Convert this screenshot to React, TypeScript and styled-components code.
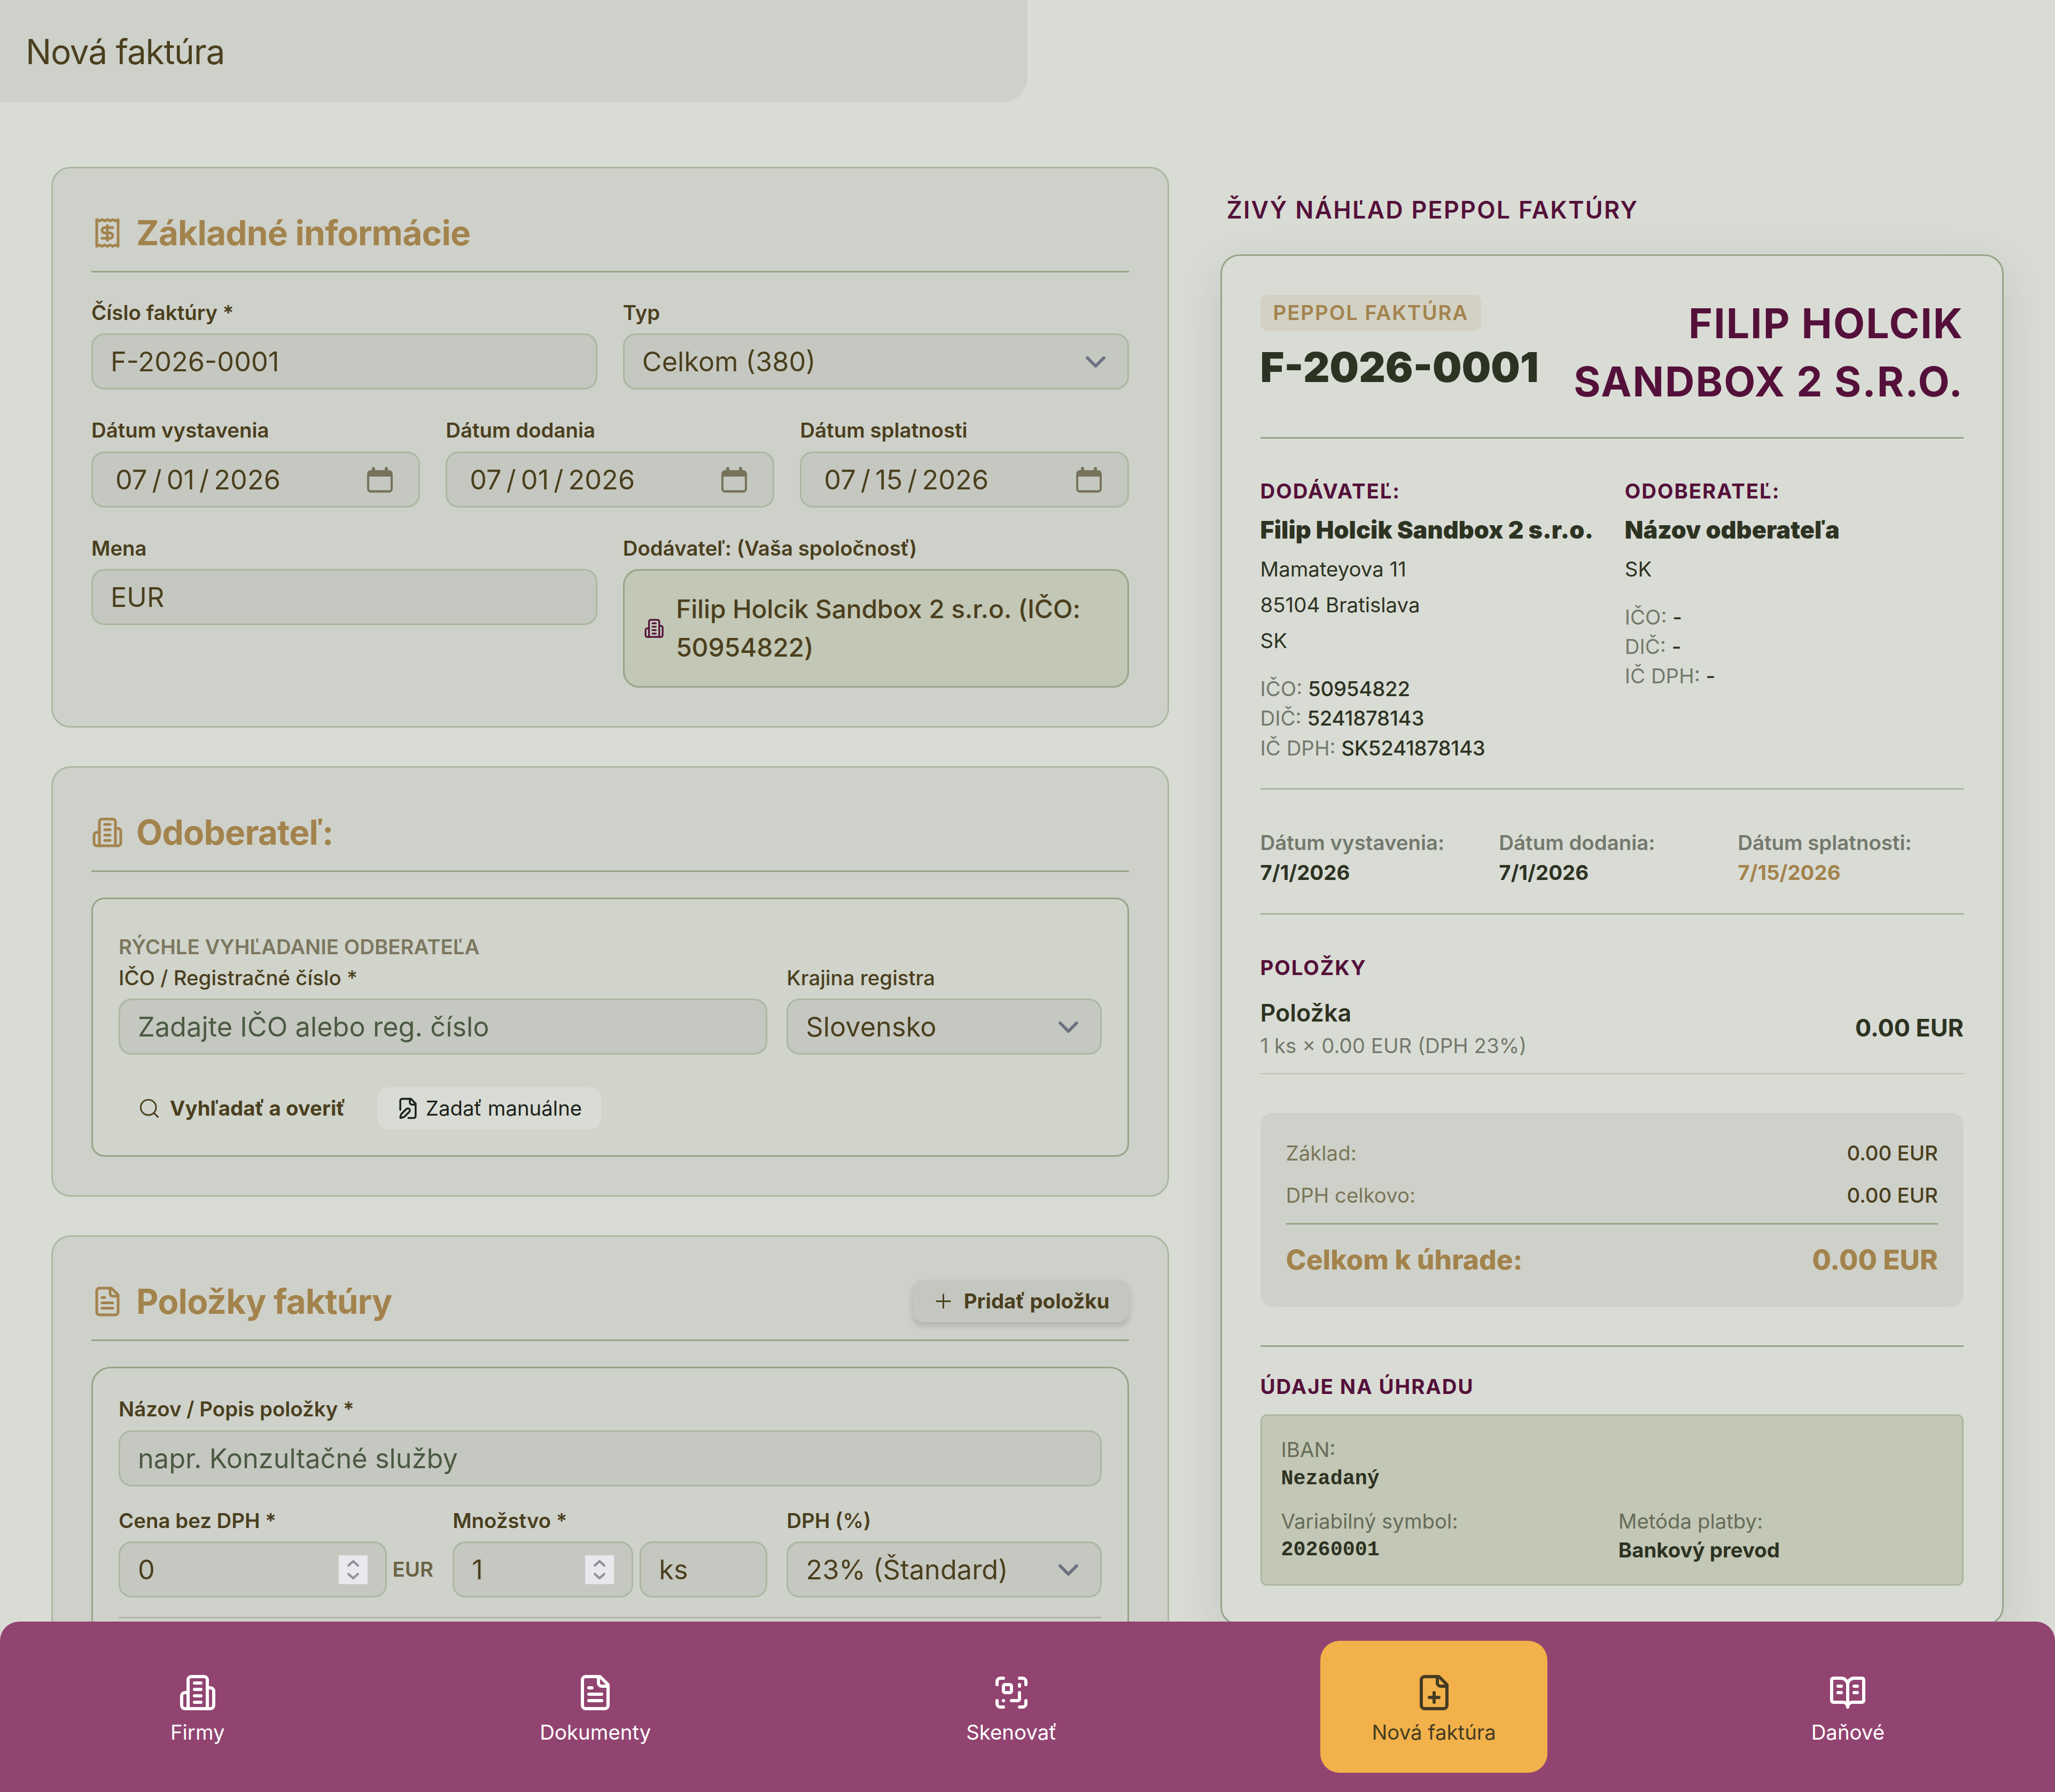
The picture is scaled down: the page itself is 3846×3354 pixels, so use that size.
import React from 'react';
import styled, { createGlobalStyle } from 'styled-components';
import { BookOpenText, Plus, ScanQrCode, Search } from 'lucide-react';

const colors = {
	page: '#d9dcd5',
	surface: '#ced1c9',
	field: '#c5c8c0',
	sage: '#c3c7b5',
	line: '#aeb6a1',
	lineStrong: '#97a487',
	text: '#4b3f1e',
	textMuted: '#7b7659',
	ink: '#2d3322',
	inkMuted: '#73796c',
	gold: '#a3834d',
	plum: '#54103a',
};

const GlobalStyle = createGlobalStyle`
	* {
		box-sizing: border-box;
	}

	body {
		margin: 0;
		overflow: hidden;
		background: ${colors.page};
		color: ${colors.text};
		font-family: Inter, 'Liberation Sans', sans-serif;
		font-size: 38.4px;
		line-height: 1.5;
	}
`;

/* icons */

const StrokeSvg = styled.svg`
	flex: none;
	fill: none;
	stroke: currentColor;
	stroke-width: 2;
	stroke-linecap: round;
	stroke-linejoin: round;
`;

type IconProps = { size: number };

const makeIcon = (...paths: string[]) => ({ size }: IconProps) => (
	<StrokeSvg viewBox="0 0 24 24" width={size} height={size}>
		{paths.map((d) => (
			<path key={d} d={d} />
		))}
	</StrokeSvg>
);

const sheet = 'M15 2H6a2 2 0 0 0-2 2v16a2 2 0 0 0 2 2h12a2 2 0 0 0 2-2V7Z';
const sheetFold = 'M14 2v4a2 2 0 0 0 2 2h4';

const ReceiptIcon = makeIcon(
	'M4 2v20l2-1 2 1 2-1 2 1 2-1 2 1 2-1 2 1V2l-2 1-2-1-2 1-2-1-2 1-2-1-2 1Z',
	'M16 8h-6a2 2 0 1 0 0 4h4a2 2 0 1 1 0 4H8',
	'M12 17.5v-11'
);
const BuildingIcon = makeIcon(
	'M6 22V4a2 2 0 0 1 2-2h8a2 2 0 0 1 2 2v18Z',
	'M6 12H4a2 2 0 0 0-2 2v6a2 2 0 0 0 2 2h2',
	'M18 9h2a2 2 0 0 1 2 2v9a2 2 0 0 1-2 2h-2',
	'M10 6h4',
	'M10 10h4',
	'M10 14h4',
	'M10 18h4'
);
const DocumentIcon = makeIcon(sheet, sheetFold, 'M10 9H8', 'M16 13H8', 'M16 17H8');
const DocumentPlusIcon = makeIcon(sheet, sheetFold, 'M9 15h6', 'M12 18v-6');
const DocumentPenIcon = makeIcon(
	'M12.5 22H18a2 2 0 0 0 2-2V7l-5-5H6a2 2 0 0 0-2 2v9.5',
	sheetFold,
	'M13.378 15.626a1 1 0 1 0-3.004-3.004l-5.01 5.012a2 2 0 0 0-.506.854l-.837 2.87a.5.5 0 0 0 .62.62l2.87-.837a2 2 0 0 0 .854-.506z'
);

const ChevronIcon = () => (
	<svg viewBox="0 0 20 20" width="77" height="77" fill="none" stroke="#6b7280" strokeWidth="1.5" strokeLinecap="round" strokeLinejoin="round">
		<path d="m6 8 4 4 4-4" />
	</svg>
);

const CalendarIcon = () => (
	<svg viewBox="0 0 48 48" width="48" height="48" fill="#77735b">
		<path fillRule="evenodd" d="M7 6h34a7 7 0 0 1 7 7v28a7 7 0 0 1-7 7H7a7 7 0 0 1-7-7V13a7 7 0 0 1 7-7ZM4 18v23q0 2.500 2.500 2.500h35q2.500 0 2.500-2.500V18Z" />
		<rect x="9" y="0" width="6" height="12" rx="3" />
		<rect x="33" y="0" width="6" height="12" rx="3" />
	</svg>
);

const SpinnerIcon = () => (
	<svg viewBox="0 0 54 54" width="54" height="54" fill="none" stroke="#8f909c" strokeWidth="4.300" strokeLinecap="round" strokeLinejoin="round">
		<rect width="54" height="54" fill="#e8e8ed" stroke="none" />
		<path d="m18.200 19 8.800-8 8.800 8" />
		<path d="m18.200 35 8.800 8 8.800-8" />
	</svg>
);

/* page frame */

const Page = styled.div`
	height: 3354px;
	overflow: hidden;
`;

const Header = styled.header`
	display: flex;
	align-items: center;
	width: 50%;
	height: 192px;
	padding: 1px 48px 0;
	border-bottom-right-radius: 48px;
	background: ${colors.surface};
	font-size: 64px;
	letter-spacing: -0.02em;
`;

const Main = styled.main`
	display: grid;
	grid-template-columns: 2091.5fr 1466.5fr;
	align-items: start;
	column-gap: 96px;
	padding: 120px 96px 0;
`;

const FormColumn = styled.form`
	display: flex;
	flex-direction: column;
	gap: 72px;
`;

const Card = styled.section`
	padding: 72px;
	border: 3px solid ${colors.line};
	border-radius: 36px;
	background: ${colors.surface};
`;

const CardHead = styled.div`
	display: flex;
	align-items: center;
	justify-content: space-between;
	height: 123px;
	padding-bottom: 23px;
	border-bottom: 3px solid ${colors.lineStrong};
`;

const CardTitle = styled.h2`
	display: flex;
	align-items: center;
	gap: 24px;
	margin: 0;
	color: ${colors.gold};
	font-size: 64px;
	font-weight: 700;
	letter-spacing: -0.0125em;
`;

/* form fields */

const Fields = styled.div`
	display: flex;
	flex-direction: column;
	gap: 48px;
	padding-top: 46.5px;
`;

const FieldRow = styled.div<{ $columns: string; $gap?: number }>`
	display: grid;
	grid-template-columns: ${(p) => p.$columns};
	align-items: start;
	column-gap: ${(p) => p.$gap ?? 48}px;
`;

const Label = styled.div<{ $weight?: number }>`
	height: 55.5px;
	margin-bottom: 12px;
	font-weight: ${(p) => p.$weight ?? 600};
	line-height: 56px;
	white-space: nowrap;
`;

const Control = styled.div<{ $placeholder?: boolean; $right?: number }>`
	display: flex;
	align-items: center;
	justify-content: space-between;
	flex: 1;
	height: 105px;
	padding: 1px ${(p) => p.$right ?? 33}px 0 33px;
	border: 3px solid ${colors.line};
	border-radius: 24px;
	background: ${colors.field};
	color: ${(p) => (p.$placeholder ? '#4a5a42' : 'inherit')};
	font-size: 50.5px;
	white-space: nowrap;
`;

const DateParts = styled.div`
	display: flex;

	span {
		padding: 0 9px;
	}
`;

const SupplierBox = styled.div`
	display: flex;
	align-items: center;
	gap: 22px;
	padding: 36px;
	border: 3px solid ${colors.lineStrong};
	border-radius: 30px;
	background: ${colors.sage};
	font-size: 48px;
	font-weight: 500;
	letter-spacing: -0.2px;

	svg {
		color: ${colors.plum};
	}
`;

const InnerBox = styled.div<{ $radius: number; $background: string; $top: number }>`
	margin-top: 48px;
	padding: ${(p) => p.$top}px 48px 48px;
	border: 3px solid ${colors.lineStrong};
	border-radius: ${(p) => p.$radius}px;
	background: ${(p) => p.$background};
`;

const Overline = styled.div`
	color: #7d7760;
	font-weight: 600;
`;

const Actions = styled.div`
	display: flex;
	gap: 24px;
	margin-top: 61px;
`;

const Button = styled.button<{ $variant: 'ghost' | 'plain' | 'raised' }>`
	display: flex;
	align-items: center;
	gap: ${(p) => (p.$variant === 'plain' ? 11.5 : 16.8)}px;
	height: 79px;
	padding: 0 36px;
	border: 0;
	border-radius: 20px;
	background: ${(p) => ({ ghost: 'transparent', plain: colors.page, raised: '#c4c7bf' }[p.$variant])};
	box-shadow: ${(p) => (p.$variant === 'raised' ? '0 6px 12px rgba(0, 0, 0, 0.16)' : 'none')};
	color: ${(p) => (p.$variant === 'plain' ? '#1e231b' : colors.text)};
	font: inherit;
	font-weight: ${(p) => (p.$variant === 'plain' ? 400 : 700)};
	white-space: nowrap;
`;

const ItemFields = styled.div`
	display: flex;
	flex-direction: column;
	gap: 36px;
`;

const Inline = styled.div<{ $gap: number }>`
	display: flex;
	align-items: center;
	gap: ${(p) => p.$gap}px;
`;

const Unit = styled.span`
	color: #6b6347;
	font-weight: 600;
`;

const UnitControl = styled(Control)`
	flex: 0 0 239px;
`;

const ItemDivider = styled.div`
	height: 300px;
	border-top: 3px solid #b0b5a6;
`;

/* live preview */

const PreviewColumn = styled.aside`
	padding-top: 48px;
	color: ${colors.ink};
`;

const PreviewHeading = styled.h3`
	margin: 0 0 48.5px 12px;
	color: ${colors.plum};
	font-size: 44.8px;
	font-weight: 600;
	letter-spacing: 0.05em;
`;

const Paper = styled.article`
	padding: 72px;
	border: 3px solid ${colors.lineStrong};
	border-radius: 36px;
	background: ${colors.page};
	box-shadow: 0 24px 96px rgba(0, 0, 0, 0.1);
	line-height: 55.2px;
`;

const PaperSection = styled.div<{ $top: number; $bottom: number; $strong?: boolean }>`
	padding: ${(p) => p.$top}px 0 ${(p) => p.$bottom}px;
	border-bottom: 3px solid ${(p) => (p.$strong ? colors.lineStrong : colors.line)};
`;

const PaperHead = styled(PaperSection)`
	display: flex;
	justify-content: space-between;
`;

const PaperItems = styled.div`
	padding-top: 72px;
`;

const Badge = styled.div`
	width: fit-content;
	margin-top: 1px;
	padding: 0 24px;
	border-radius: 12px;
	background: #d2d1c4;
	color: ${colors.gold};
	font-weight: 600;
	letter-spacing: 0.05em;
	line-height: 67px;
`;

const InvoiceNumber = styled.div`
	margin-top: 15px;
	font-size: 76.8px;
	font-weight: 900;
	line-height: 108px;
`;

const Brand = styled.div`
	width: 760px;
	color: ${colors.plum};
	font-size: 76.8px;
	font-weight: 700;
	letter-spacing: 0.026em;
	line-height: 109.5px;
	text-align: right;
`;

const Columns = styled.div<{ $count: number; $gap: number }>`
	display: grid;
	grid-template-columns: repeat(${(p) => p.$count}, minmax(0, 1fr));
	column-gap: ${(p) => p.$gap}px;
`;

const SmallHeading = styled.div`
	color: ${colors.plum};
	font-weight: 700;
	letter-spacing: 0.05em;
`;

const PartyName = styled.div`
	margin: 11px 0 6px;
	font-size: 45px;
	font-weight: 900;
	line-height: 67.2px;
	white-space: nowrap;
`;

const Address = styled.div`
	margin-bottom: 29px;
	line-height: 67.2px;
`;

const Muted = styled.span<{ $weight?: number }>`
	color: ${colors.inkMuted};
	font-weight: ${(p) => p.$weight ?? 400};
`;

const IdentValue = styled.span`
	font-weight: 500;
	letter-spacing: -0.008em;
`;

const DateValue = styled.div<{ $due?: boolean }>`
	color: ${(p) => (p.$due ? colors.gold : 'inherit')};
	font-weight: 700;
`;

const LineItem = styled.div`
	display: flex;
	align-items: center;
	justify-content: space-between;
	padding: 24px 0 23px;
	border-bottom: 3px solid ${colors.sage};
`;

const LineTitle = styled.div<{ $weight: number }>`
	font-size: 44.8px;
	font-weight: ${(p) => p.$weight};
	line-height: 67.2px;
`;

const Totals = styled.div`
	margin: 72px 0;
	padding: 48px 48px 50.5px;
	border-radius: 24px;
	background: ${colors.surface};
	color: ${colors.text};
`;

const TotalRow = styled.div`
	display: flex;
	justify-content: space-between;
	margin-bottom: 23.5px;
	font-weight: 500;

	span:first-child {
		color: ${colors.textMuted};
		font-weight: 400;
	}
`;

const GrandTotal = styled.div`
	display: flex;
	justify-content: space-between;
	padding-top: 27px;
	border-top: 3px solid ${colors.lineStrong};
	color: ${colors.gold};
	font-size: 51.4px;
	font-weight: 800;
	line-height: 76.8px;
`;

const Payment = styled.div`
	padding-top: 47px;
	border-top: 3px solid ${colors.lineStrong};
`;

const BankBox = styled.div`
	display: grid;
	gap: 24px;
	margin-top: 24px;
	padding: 36px;
	border: 3px solid ${colors.line};
	border-radius: 12px;
	background: ${colors.sage};
	line-height: 54.7px;

	${Muted} {
		color: #666c59;
	}
`;

const BankValue = styled.div<{ $mono?: boolean }>`
	font-family: ${(p) => (p.$mono ? "'Liberation Mono', monospace" : 'inherit')};
	font-weight: 700;
`;

/* bottom navigation */

const Nav = styled.nav`
	position: fixed;
	right: 0;
	bottom: 0;
	left: 0;
	display: flex;
	justify-content: space-around;
	height: 319px;
	padding: 36px 24px;
	border-radius: 36px 36px 0 0;
	background: #924471;
`;

const NavItem = styled.a<{ $active?: boolean }>`
	display: flex;
	flex-direction: column;
	align-items: center;
	gap: 10px;
	padding: 61px 96px 0;
	border-radius: 36px;
	background: ${(p) => (p.$active ? '#f2b14a' : 'transparent')};
	color: ${(p) => (p.$active ? '#453c23' : '#fff')};
	line-height: 56px;
`;

const DateField = ({ label, value }: { label: string; value: string[] }) => (
	<div>
		<Label>{label}</Label>
		<Control $right={48}>
			<DateParts>
				<span>{value[0]}</span>/<span>{value[1]}</span>/<span>{value[2]}</span>
			</DateParts>
			<CalendarIcon />
		</Control>
	</div>
);

const SelectField = ({ label, value, weight }: { label: string; value: string; weight?: number }) => (
	<div>
		<Label $weight={weight}>{label}</Label>
		<Control $right={21}>
			{value}
			<ChevronIcon />
		</Control>
	</div>
);

const IdentRow = ({ label, value }: { label: string; value: string }) => (
	<div>
		<Muted>{label}</Muted> <IdentValue>{value}</IdentValue>
	</div>
);

const BasicInfo = () => (
	<Card>
		<CardHead>
			<CardTitle>
				<ReceiptIcon size={60} />
				Základné informácie
			</CardTitle>
		</CardHead>
		<Fields>
			<FieldRow $columns="1fr 1fr">
				<div>
					<Label>Číslo faktúry *</Label>
					<Control>F-2026-0001</Control>
				</div>
				<SelectField label="Typ" value="Celkom (380)" />
			</FieldRow>
			<FieldRow $columns="1fr 1fr 1fr">
				<DateField label="Dátum vystavenia" value={['07', '01', '2026']} />
				<DateField label="Dátum dodania" value={['07', '01', '2026']} />
				<DateField label="Dátum splatnosti" value={['07', '15', '2026']} />
			</FieldRow>
			<FieldRow $columns="1fr 1fr">
				<div>
					<Label>Mena</Label>
					<Control>EUR</Control>
				</div>
				<div>
					<Label>Dodávateľ: (Vaša spoločnosť)</Label>
					<SupplierBox>
						<BuildingIcon size={38.4} />
						Filip Holcik Sandbox 2 s.r.o. (IČO: 50954822)
					</SupplierBox>
				</div>
			</FieldRow>
		</Fields>
	</Card>
);

const Customer = () => (
	<Card>
		<CardHead>
			<CardTitle>
				<BuildingIcon size={60} />
				Odoberateľ:
			</CardTitle>
		</CardHead>
		<InnerBox $radius={24} $background="#d0d4cb" $top={61}>
			<Overline>RÝCHLE VYHĽADANIE ODBERATEĽA</Overline>
			<FieldRow $columns="minmax(0, 1214fr) minmax(0, 589fr)" $gap={36}>
				<div>
					<Label $weight={500}>IČO / Registračné číslo *</Label>
					<Control $placeholder>Zadajte IČO alebo reg. číslo</Control>
				</div>
				<SelectField label="Krajina registra" value="Slovensko" weight={500} />
			</FieldRow>
			<Actions>
				<Button type="button" $variant="ghost">
					<Search size={43} strokeWidth={1.65} />
					Vyhľadať a overiť
				</Button>
				<Button type="button" $variant="plain">
					<DocumentPenIcon size={43} />
					Zadať manuálne
				</Button>
			</Actions>
		</InnerBox>
	</Card>
);

const Items = () => (
	<Card>
		<CardHead>
			<CardTitle>
				<DocumentIcon size={60} />
				Položky faktúry
			</CardTitle>
			<Button type="button" $variant="raised">
				<Plus size={43} strokeWidth={1.65} />
				Pridať položku
			</Button>
		</CardHead>
		<InnerBox $radius={36} $background="#cfd2cb" $top={48}>
			<ItemFields>
				<div>
					<Label>Názov / Popis položky *</Label>
					<Control $placeholder>napr. Konzultačné služby</Control>
				</div>
				<FieldRow $columns="repeat(3, minmax(0, 1fr))" $gap={36}>
					<div>
						<Label>Cena bez DPH *</Label>
						<Inline $gap={11}>
							<Control>
								0
								<SpinnerIcon />
							</Control>
							<Unit>EUR</Unit>
						</Inline>
					</div>
					<div>
						<Label>Množstvo *</Label>
						<Inline $gap={12}>
							<Control>
								1
								<SpinnerIcon />
							</Control>
							<UnitControl>ks</UnitControl>
						</Inline>
					</div>
					<SelectField label="DPH (%)" value="23% (Štandard)" />
				</FieldRow>
				<ItemDivider />
			</ItemFields>
		</InnerBox>
	</Card>
);

const Preview = () => (
	<PreviewColumn>
		<PreviewHeading>ŽIVÝ NÁHĽAD PEPPOL FAKTÚRY</PreviewHeading>
		<Paper>
			<PaperHead $top={0} $bottom={48} $strong>
				<div>
					<Badge>PEPPOL FAKTÚRA</Badge>
					<InvoiceNumber>F-2026-0001</InvoiceNumber>
				</div>
				<Brand>FILIP HOLCIK SANDBOX 2 S.R.O.</Brand>
			</PaperHead>
			<PaperSection $top={71.5} $bottom={47.5}>
				<Columns $count={2} $gap={48}>
					<div>
						<SmallHeading>DODÁVATEĽ:</SmallHeading>
						<PartyName>Filip Holcik Sandbox 2 s.r.o.</PartyName>
						<Address>
							<div>Mamateyova 11</div>
							<div>85104 Bratislava</div>
							<div>SK</div>
						</Address>
						<IdentRow label="IČO:" value="50954822" />
						<IdentRow label="DIČ:" value="5241878143" />
						<IdentRow label="IČ DPH:" value="SK5241878143" />
					</div>
					<div>
						<SmallHeading>ODOBERATEĽ:</SmallHeading>
						<PartyName>Názov odberateľa</PartyName>
						<Address>
							<div>SK</div>
						</Address>
						<IdentRow label="IČO:" value="-" />
						<IdentRow label="DIČ:" value="-" />
						<IdentRow label="IČ DPH:" value="-" />
					</div>
				</Columns>
			</PaperSection>
			<PaperSection $top={72} $bottom={48}>
				<Columns $count={3} $gap={24}>
					<div>
						<Muted $weight={600}>Dátum vystavenia:</Muted>
						<DateValue>7/1/2026</DateValue>
					</div>
					<div>
						<Muted $weight={600}>Dátum dodania:</Muted>
						<DateValue>7/1/2026</DateValue>
					</div>
					<div>
						<Muted $weight={600}>Dátum splatnosti:</Muted>
						<DateValue $due>7/15/2026</DateValue>
					</div>
				</Columns>
			</PaperSection>
			<PaperItems>
				<SmallHeading>POLOŽKY</SmallHeading>
				<LineItem>
					<div>
						<LineTitle $weight={600}>Položka</LineTitle>
						<Muted>1 ks × 0.00 EUR (DPH 23%)</Muted>
					</div>
					<LineTitle $weight={700}>0.00 EUR</LineTitle>
				</LineItem>
			</PaperItems>
			<Totals>
				<TotalRow>
					<span>Základ:</span>
					<span>0.00 EUR</span>
				</TotalRow>
				<TotalRow>
					<span>DPH celkovo:</span>
					<span>0.00 EUR</span>
				</TotalRow>
				<GrandTotal>
					<span>Celkom k úhrade:</span>
					<span>0.00 EUR</span>
				</GrandTotal>
			</Totals>
			<Payment>
				<SmallHeading>ÚDAJE NA ÚHRADU</SmallHeading>
				<BankBox>
					<div>
						<Muted>IBAN:</Muted>
						<BankValue $mono>Nezadaný</BankValue>
					</div>
					<Columns $count={2} $gap={24}>
						<div>
							<Muted>Variabilný symbol:</Muted>
							<BankValue $mono>20260001</BankValue>
						</div>
						<div>
							<Muted>Metóda platby:</Muted>
							<BankValue>Bankový prevod</BankValue>
						</div>
					</Columns>
				</BankBox>
			</Payment>
		</Paper>
	</PreviewColumn>
);

const App = () => (
	<Page>
		<GlobalStyle />
		<Header>Nová faktúra</Header>
		<Main>
			<FormColumn>
				<BasicInfo />
				<Customer />
				<Items />
			</FormColumn>
			<Preview />
		</Main>
		<Nav>
			<NavItem>
				<BuildingIcon size={72} />
				Firmy
			</NavItem>
			<NavItem>
				<DocumentIcon size={72} />
				Dokumenty
			</NavItem>
			<NavItem>
				<ScanQrCode size={72} />
				Skenovať
			</NavItem>
			<NavItem $active>
				<DocumentPlusIcon size={72} />
				Nová faktúra
			</NavItem>
			<NavItem>
				<BookOpenText size={72} />
				Daňové
			</NavItem>
		</Nav>
	</Page>
);

export default App;
